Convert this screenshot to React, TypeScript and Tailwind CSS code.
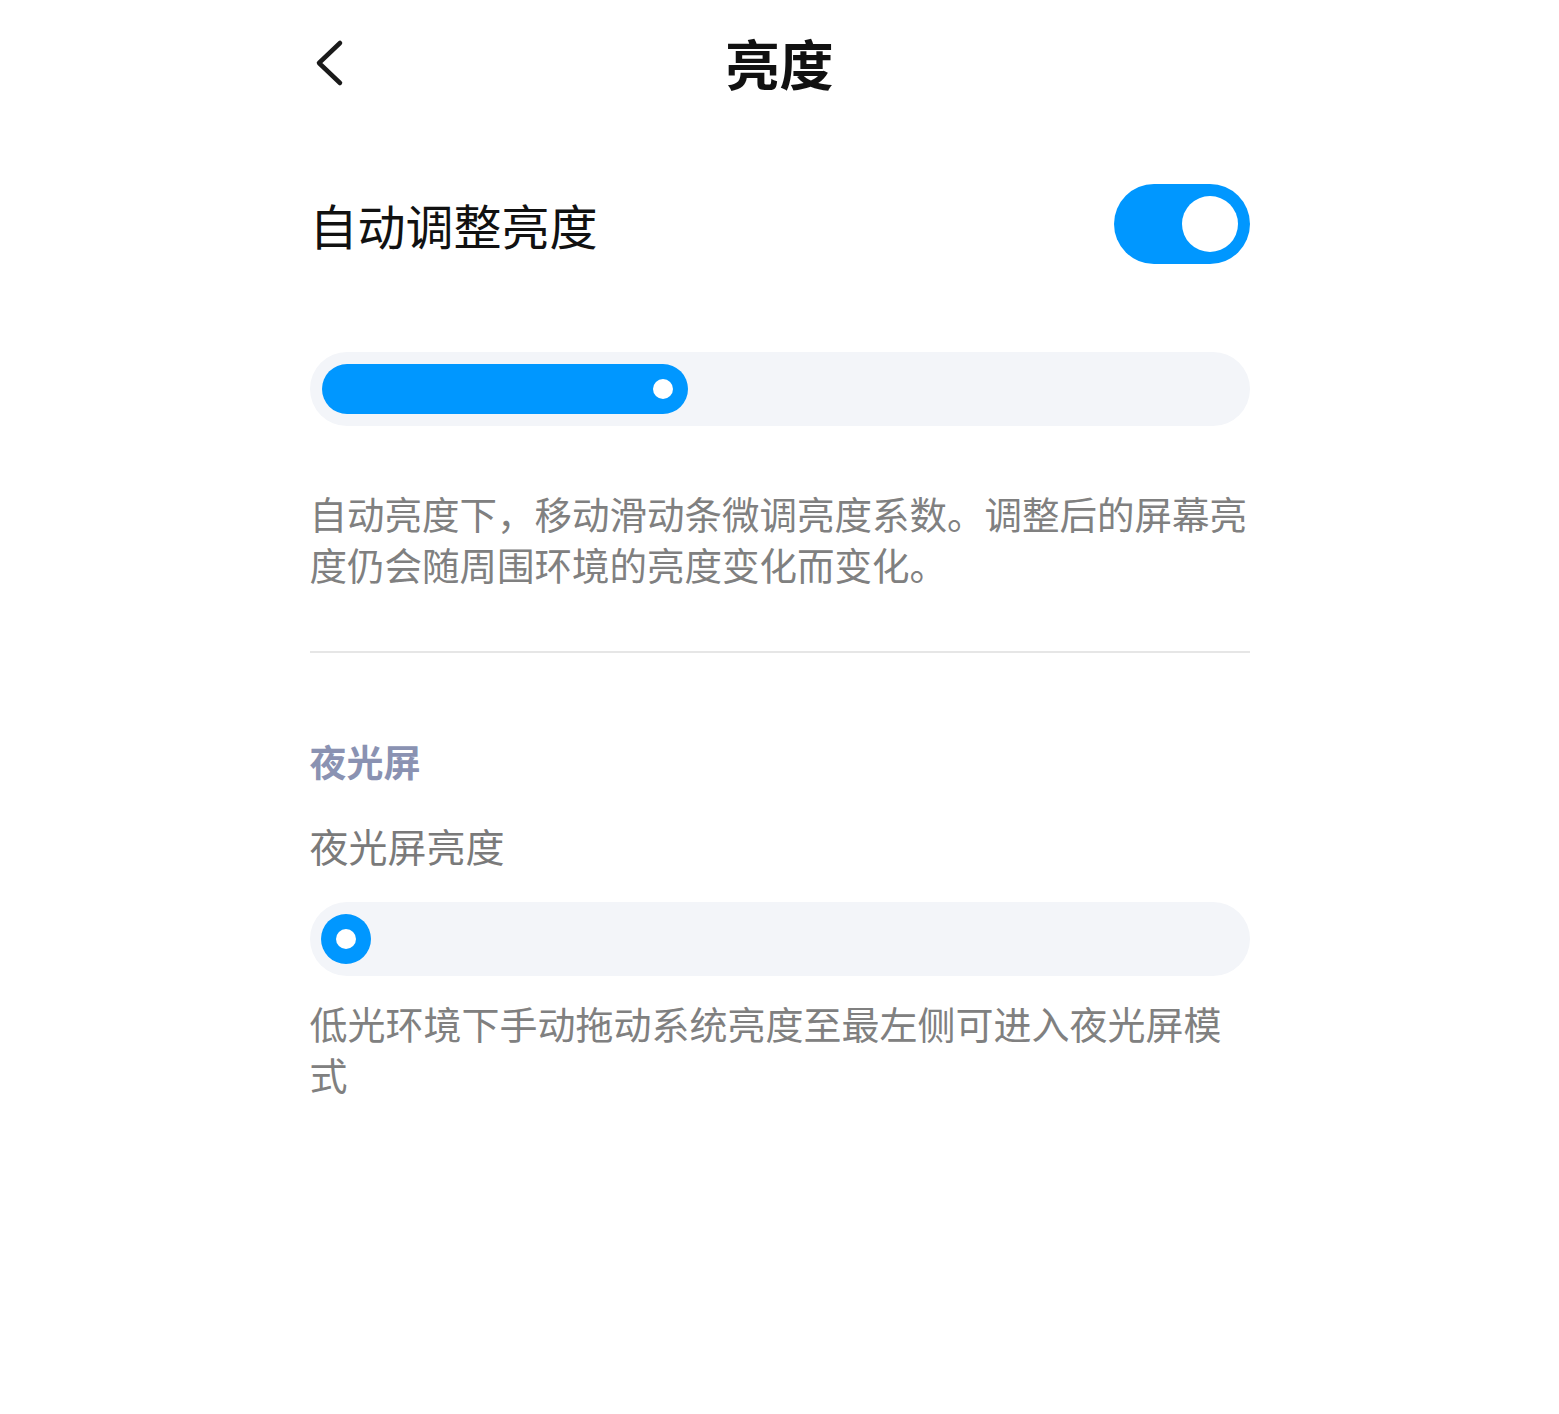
import { useState } from "react";

const cjk = { fontFamily: '"Noto Sans CJK SC", "Noto Sans", sans-serif' };

function BackIcon() {
  return (
    <svg width="32" height="48" viewBox="0 0 32 48" fill="none">
      <polyline
        points="27,4 6,24 27,44"
        stroke="#1a1a1a"
        strokeWidth="4.5"
        strokeLinecap="round"
        strokeLinejoin="round"
      />
    </svg>
  );
}

function Toggle({ on, onChange }: { on: boolean; onChange: (v: boolean) => void }) {
  return (
    <button
      type="button"
      onClick={() => onChange(!on)}
      className={`flex h-[80px] w-[136px] items-center rounded-full px-[12px] ${
        on ? "justify-end bg-[#0097ff]" : "justify-start bg-[#d9dce3]"
      }`}>
      <span className="h-[56px] w-[56px] rounded-full bg-white" />
    </button>
  );
}

function BrightnessBar({ value }: { value: number }) {
  return (
    <div className="flex h-[74px] w-full items-center rounded-full bg-[#f3f5f9] px-[12px]">
      <div
        className="flex h-[50px] items-center justify-end rounded-full bg-[#0097ff] pr-[15px]"
        style={{ width: `${value}%` }}>
        <span className="h-[20px] w-[20px] rounded-full bg-white" />
      </div>
    </div>
  );
}

function NightBar() {
  return (
    <div className="flex h-[74px] w-full items-center rounded-full bg-[#f3f5f9] px-[11px]">
      <div className="flex h-[50px] w-[50px] items-center justify-center rounded-full bg-[#0097ff]">
        <span className="h-[20px] w-[20px] rounded-full bg-white" />
      </div>
    </div>
  );
}

export default function App() {
  const [auto, setAuto] = useState(true);

  return (
    <div className="min-h-[1414px] bg-white" style={cjk}>
      <div className="mx-auto w-[940px]">
        <header className="grid h-[126px] grid-cols-[1fr_auto_1fr] items-center">
          <button type="button" className="flex w-fit items-center pl-[3px]">
            <BackIcon />
          </button>
          <h1 className="text-[54px] font-bold leading-none text-[#111]">亮度</h1>
          <div />
        </header>

        <div className="mt-[58px] flex items-center justify-between">
          <span className="text-[48px] leading-none text-[#111]">自动调整亮度</span>
          <Toggle on={auto} onChange={setAuto} />
        </div>

        <div className="mt-[88px]">
          <BrightnessBar value={40} />
        </div>

        <p className="mt-[61px] text-[37.5px] leading-[51px] text-[#808080]">
          自动亮度下，移动滑动条微调亮度系数。调整后的屏幕亮度仍会随周围环境的亮度变化而变化。
        </p>

        <div className="mt-[62px] h-[2px] bg-[#e6e6e6]" />

        <h2 className="mt-[83px] text-[37px] font-semibold leading-[50px] text-[#8a92b2]">夜光屏</h2>

        <div className="mt-[34px] text-[39px] leading-[50px] text-[#7a7a7a]">夜光屏亮度</div>

        <div className="mt-[32px]">
          <NightBar />
        </div>

        <p className="mt-[21px] text-[38px] leading-[51px] text-[#808080]">
          低光环境下手动拖动系统亮度至最左侧可进入夜光屏模式
        </p>
      </div>
    </div>
  );
}
